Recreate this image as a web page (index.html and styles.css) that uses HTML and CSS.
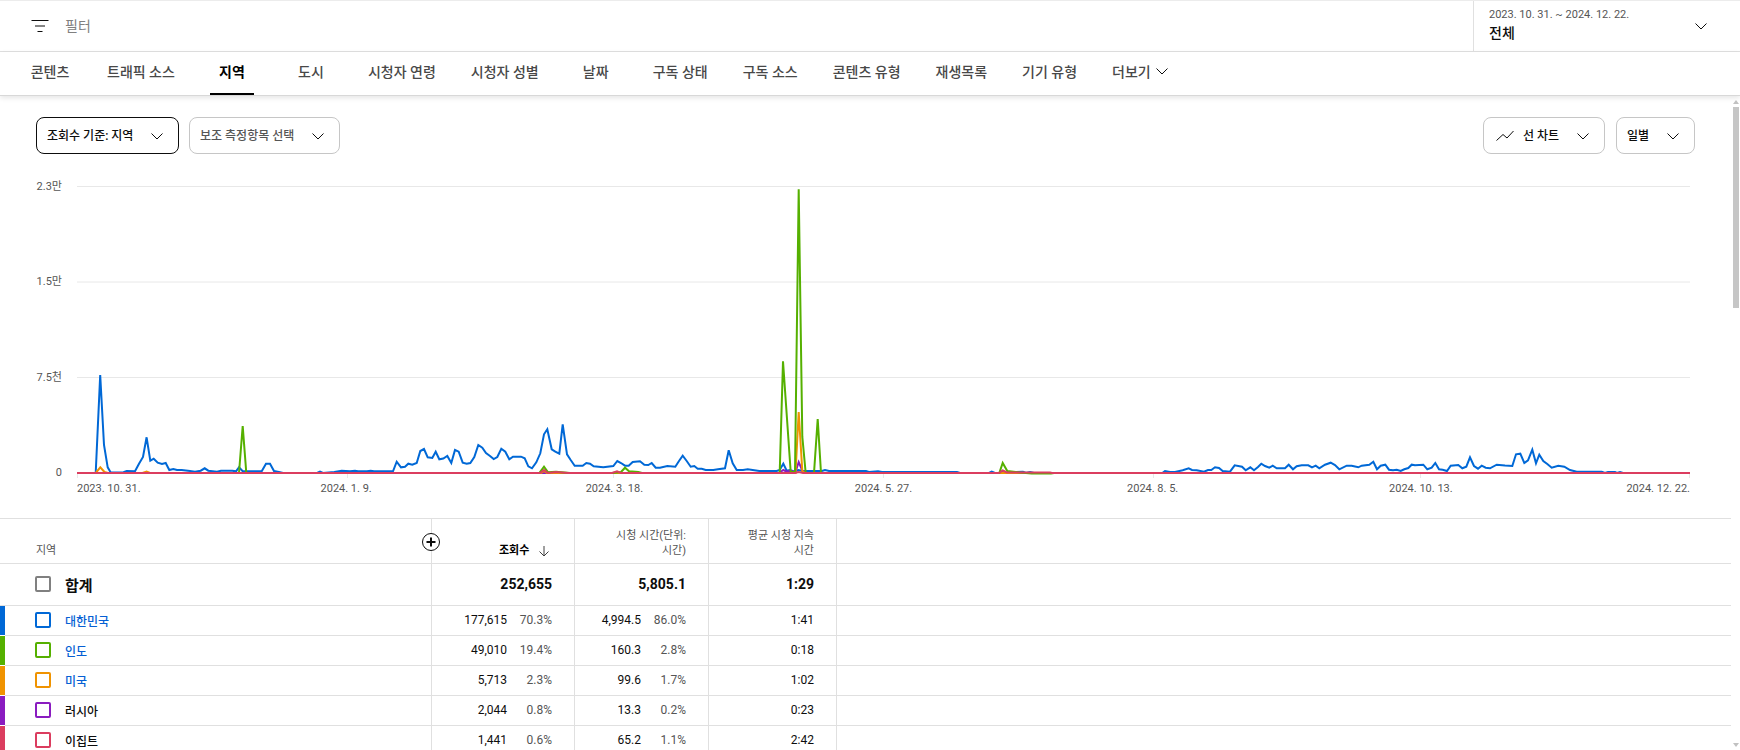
FILE: index.html
```html
<!DOCTYPE html>
<html lang="ko">
<head>
<meta charset="utf-8">
<meta name="viewport" content="width=device-width, initial-scale=1">
<title>지역 분석</title>
<link rel="stylesheet" href="styles.css">
</head>
<body>
<header class="filterbar">
  <label class="filter">
    <svg class="filter-icon" width="18" height="14" viewBox="0 0 18 14" aria-hidden="true"><path d="M.5 1.5h17M4 7h10M6.500 12.500h5"/></svg>
    <input class="filter-input" type="text" placeholder="필터" aria-label="필터">
  </label>
  <button class="daterange" type="button">
    <span class="daterange-text">
      <span class="daterange-dates">2023. 10. 31. ~ 2024. 12. 22.</span>
      <span class="daterange-name">전체</span>
    </span>
    <svg class="chevron" width="14" height="8" viewBox="0 0 14 8" aria-hidden="true"><path d="M1.500 1.500 7 7l5.500-5.500"/></svg>
  </button>
</header>

<nav class="tabs">
  <a class="tab" href="#content">콘텐츠</a>
  <a class="tab" href="#traffic">트래픽 소스</a>
  <a class="tab tab-active" href="#geography" aria-current="page">지역</a>
  <a class="tab" href="#city">도시</a>
  <a class="tab" href="#age">시청자 연령</a>
  <a class="tab" href="#gender">시청자 성별</a>
  <a class="tab" href="#date">날짜</a>
  <a class="tab" href="#substatus">구독 상태</a>
  <a class="tab" href="#subsource">구독 소스</a>
  <a class="tab" href="#type">콘텐츠 유형</a>
  <a class="tab" href="#playlist">재생목록</a>
  <a class="tab" href="#device">기기 유형</a>
  <button class="tab tab-more" type="button">더보기
    <svg class="chevron" width="14" height="8" viewBox="0 0 14 8" aria-hidden="true"><path d="M1.500 1.500 7 7l5.500-5.500"/></svg>
  </button>
</nav>

<div class="viewport">
<main class="report">
  <div class="toolbar">
    <div class="chip chip-primary">
      <select class="chip-select" aria-label="기본 측정항목"><option>조회수 기준: 지역</option></select>
      <svg class="chevron chip-chevron" width="14" height="8" viewBox="0 0 14 8" aria-hidden="true"><path d="M1.500 1.500 7 7l5.500-5.500"/></svg>
    </div>
    <div class="chip chip-muted">
      <select class="chip-select" aria-label="보조 측정항목"><option>보조 측정항목 선택</option></select>
      <svg class="chevron chip-chevron" width="14" height="8" viewBox="0 0 14 8" aria-hidden="true"><path d="M1.500 1.500 7 7l5.500-5.500"/></svg>
    </div>
    <div class="toolbar-end">
      <div class="chip chip-icon">
        <svg class="chip-lead" width="20" height="12" viewBox="0 0 20 12" aria-hidden="true"><path d="M1.500 10.500 8 4.500l4 3.500 6.500-7"/></svg>
        <select class="chip-select" aria-label="차트 유형"><option>선 차트</option></select>
        <svg class="chevron chip-chevron" width="14" height="8" viewBox="0 0 14 8" aria-hidden="true"><path d="M1.500 1.500 7 7l5.500-5.500"/></svg>
      </div>
      <div class="chip">
        <select class="chip-select" aria-label="기간 단위"><option>일별</option></select>
        <svg class="chevron chip-chevron" width="14" height="8" viewBox="0 0 14 8" aria-hidden="true"><path d="M1.500 1.500 7 7l5.500-5.500"/></svg>
      </div>
    </div>
  </div>

  <section class="chart" aria-label="지역별 조회수">
    <div class="y-axis"><span>2.3만</span><span>1.5만</span><span>7.5천</span><span>0</span></div>
    <svg class="plot" viewBox="77 179 1613 301" preserveAspectRatio="none" role="img" aria-label="지역별 일일 조회수 선 차트">
      <path class="grid" d="M77 186.500H1690M77 282H1690M77 377.500H1690"/>
      <path class="grid" d="M77.500 474v4M347.500 474v4M613.500 474v4M883.500 474v4M1153.500 474v4M1420.500 474v4M1689.500 474v4"/>
      <polyline class="series blue" points="77,473 95.7,473 100.2,375 104,445 107.7,467.3 110.7,472.5 123.5,472.3 126.7,471 135,471.3 139,463.7 143,457 146.6,437.3 150.3,460.7 153.7,458.7 157.7,462.7 162,464 165.7,463 169.3,470 173.3,469 177,470 181.7,470 190,471 195,471.7 200.7,470.7 204.7,468.3 208.3,470.7 217,471.7 221,470.7 232.3,470.7 236,471.3 239,467.3 242.7,471.3 261.7,471.3 266,463.7 270,463.7 274,471 280,472.3 283,473 317,473 320,471.7 323,473 334.3,472 341.7,470.7 350,471.3 355,470.7 358,471.3 367,471.3 370.7,470.7 374,471.3 393,471.3 396.7,461.7 401,467.3 405,466.7 408.3,463.7 412.3,464.7 416.7,463 420.3,451 424,449 427.7,457.3 432.3,458 435.7,451.7 439.3,459.3 443.3,458.500 447.3,456 451.3,463 455,450 458.7,451.7 462.7,462.7 466.7,463.7 470.3,463 474.3,457 478.3,445 482.3,447.7 486,453 490,456 493.7,459 497.3,457 501.3,448.7 505.3,451.7 509.3,459.3 513,456.7 521,456.7 524.7,458.3 528.3,466.3 532,468.3 536.3,462.3 540.3,453.3 544,434.3 547.3,429.3 551.7,449.3 555.3,451.7 559.3,453.7 562.7,424.3 567,454.3 570.7,460 574.7,465.7 582.7,465.7 586.3,463 590,463.7 593.7,466.3 603.3,467.3 613.3,466 617.3,461 621,463 625,465.7 628.7,465.7 632.7,462 640,461.3 644.3,464.7 648.3,465 651.7,463 655.7,467.7 660,467.7 667.3,466 675.3,466.7 679,461 682.7,455.7 686.7,461 690.7,466.7 694.3,466 697.7,468.7 701.7,468.7 705.7,470 713.3,470 718,469.3 725,468.3 728.7,450.3 732.7,463.3 736.7,470 743,470 747.7,469.3 759.3,471 776.7,471 779.7,470 783.3,463.7 786.7,470.7 790,470 795,471.7 798.3,470 803,471 822,471 825,470 829,471 866,471 869,472 878,471.3 882,472 957,472 960,473 989,473 991.7,471.7 995,473 1000,473 1002.7,471 1006,473 1015,472 1023,471.7 1026,473 1030,472 1034,473 1162.3,473 1165,471 1170,472 1175,472 1182.7,470.3 1188.7,468.3 1192,470 1196.7,470.3 1204,471.7 1208,470 1211.3,470 1215,467.3 1219,468 1222.7,471 1230,471.7 1234.7,465.3 1242,466.7 1245.7,470.3 1250.3,467.3 1254,470.3 1258,467 1261.3,463.7 1265,466 1269.3,467.7 1272.7,465.7 1276.7,468.3 1285,468.3 1288.7,464.7 1293,469.3 1296.7,466.3 1301.7,465.3 1308.3,465.3 1312,467.3 1315.7,465.7 1319.3,468.3 1325,464.7 1330.7,462.7 1335,465 1339.3,469.3 1346.7,465.7 1351.7,465.7 1358.3,467.3 1361.7,465.7 1369.3,464.7 1373.3,461.7 1377,469.3 1380.7,465.7 1385.3,464.7 1389,469.7 1393,470.3 1396.7,469.7 1400.7,471 1404.3,469.3 1408.3,468 1411.7,464.7 1415,465.3 1423.3,464.7 1427.3,469.3 1431.7,467.7 1435.3,463 1439,469.3 1442.7,469.7 1447,471 1450.7,465.7 1458.3,465 1462.3,468.3 1466.3,466.7 1470,457.3 1474,466 1478,468.7 1481.7,465.7 1485.7,467.7 1490,468.3 1496.7,464.7 1505,465.500 1512.3,466 1516,454.3 1520.3,453.7 1524.3,463 1528,460.3 1532.3,449.7 1536,463.3 1539.3,454.7 1543.3,461 1547.3,464 1551.7,467.7 1558.3,465.7 1564.3,466.7 1570,470 1576.7,471.7 1601.7,471.7 1605,473 1608,472 1615,472 1617,473 1620,472 1623,473 1690,473"/>
      <polyline class="series purple" points="77,473 779,473 783.3,470 786.7,471.7 790,470.7 795.500,472 798.7,462 802.3,470.500 806,473 1690,473"/>
      <polyline class="series orange" points="77,473 95.7,473 100.3,467.3 104.500,472 108,473 142.500,473 146.6,471.500 150,473 541,473 544,471 547,473 795.500,473 798.7,412 802.3,471 805,473 1690,473"/>
      <polyline class="series green" points="77,473 239,473 242.7,426 246.3,473 539.3,473 544,466.7 548,472.3 556,471.7 570,473 612.3,473 621,472 625,467.7 629,471.3 638.3,472 642,473 779.7,473 783,361.3 790.7,472 795,472 798.7,189.3 802.3,436.7 805.7,473 814,473 817.7,419 821,473 999.3,473 1002.7,463 1007.3,471 1020,472.500 1031.7,473.500 1051,473.500 1054,473 1690,473"/>
      <polyline class="series red" points="77,473 540,473 544,470 548,473 556,472 568,473 612,473 617,471.3 621,473 795,473 798.7,472 803,473 999,473 1002.7,470.500 1007,472.500 1030,472.500 1050,472.500 1052,473 1690,473"/>
    </svg>
    <div class="x-axis">
      <span>2023. 10. 31.</span><span>2024. 1. 9.</span><span>2024. 3. 18.</span><span>2024. 5. 27.</span><span>2024. 8. 5.</span><span>2024. 10. 13.</span><span>2024. 12. 22.</span>
    </div>
  </section>

  <table class="data">
    <colgroup><col class="col-swatch"><col class="col-name"><col class="col-views"><col class="col-watch"><col class="col-avg"><col></colgroup>
    <thead>
      <tr>
        <th class="swatch"></th>
        <th class="name" scope="col">지역
          <button class="add" type="button" aria-label="측정항목 추가"><svg width="20" height="20" viewBox="0 0 20 20" aria-hidden="true"><circle cx="10" cy="10" r="8.500"/><path d="M10 5.500v9M5.500 10h9"/></svg></button>
        </th>
        <th class="num sorted" scope="col" aria-sort="descending">조회수
          <svg class="sort" width="16" height="12" viewBox="0 0 16 12" aria-hidden="true"><path d="M8 1v10M3.500 6.500 8 11l4.500-4.500"/></svg>
        </th>
        <th class="num" scope="col">시청 시간(단위:<br>시간)</th>
        <th class="num" scope="col">평균 시청 지속<br>시간</th>
        <th class="rest"></th>
      </tr>
    </thead>
    <tbody>
      <tr class="total"><td class="swatch"></td><td class="name"><label class="pick"><input type="checkbox" class="check">합계</label></td><td class="num">252,655</td><td class="num">5,805.1</td><td class="num">1:29</td><td class="rest"></td></tr>
      <tr class="row-blue"><td class="swatch"></td><td class="name"><div class="pick"><input type="checkbox" class="check" aria-label="대한민국"><a href="#kr">대한민국</a></div></td><td class="num">177,615<span class="pct">70.3%</span></td><td class="num">4,994.5<span class="pct">86.0%</span></td><td class="num">1:41</td><td class="rest"></td></tr>
      <tr class="row-green"><td class="swatch"></td><td class="name"><div class="pick"><input type="checkbox" class="check" aria-label="인도"><a href="#in">인도</a></div></td><td class="num">49,010<span class="pct">19.4%</span></td><td class="num">160.3<span class="pct">2.8%</span></td><td class="num">0:18</td><td class="rest"></td></tr>
      <tr class="row-orange"><td class="swatch"></td><td class="name"><div class="pick"><input type="checkbox" class="check" aria-label="미국"><a href="#us">미국</a></div></td><td class="num">5,713<span class="pct">2.3%</span></td><td class="num">99.6<span class="pct">1.7%</span></td><td class="num">1:02</td><td class="rest"></td></tr>
      <tr class="row-purple"><td class="swatch"></td><td class="name"><label class="pick"><input type="checkbox" class="check">러시아</label></td><td class="num">2,044<span class="pct">0.8%</span></td><td class="num">13.3<span class="pct">0.2%</span></td><td class="num">0:23</td><td class="rest"></td></tr>
      <tr class="row-red"><td class="swatch"></td><td class="name"><label class="pick"><input type="checkbox" class="check">이집트</label></td><td class="num">1,441<span class="pct">0.6%</span></td><td class="num">65.2<span class="pct">1.1%</span></td><td class="num">2:42</td><td class="rest"></td></tr>
    </tbody>
  </table>
</main>
<div class="scrollbar" aria-hidden="true">
  <svg width="6" height="4" viewBox="0 0 6 4"><path d="M0 4 3 0l3 4z"/></svg>
  <div class="thumb"></div>
  <svg class="scroll-down" width="6" height="4" viewBox="0 0 6 4"><path d="M0 0h6L3 4z"/></svg>
</div>
</div>
</body>
</html>
```
FILE: styles.css
```css
:root {
  --line: #e0e0e0;
  --text: #0d0d0d;
  --muted: #555;
  --blue: #0068d6;
  --green: #55b000;
  --orange: #f09300;
  --purple: #8a1cc0;
  --red: #db3d5f;
}

* { box-sizing: border-box; }

body {
  margin: 0;
  height: 100vh;
  display: flex;
  flex-direction: column;
  overflow: hidden;
  background: #fff;
  color: var(--text);
  font-family: Roboto, "Noto Sans CJK KR", sans-serif;
  font-size: 12px;
}

button, input, select {
  margin: 0;
  padding: 0;
  border: 0;
  background: none;
  color: inherit;
  font: inherit;
}

svg { display: block; flex: none; }
a { color: inherit; text-decoration: none; }

.chevron { fill: none; stroke: #0d0d0d; stroke-width: 1; }

/* Filter bar */
.filterbar {
  display: flex;
  flex: none;
  height: 52px;
  border-top: 1px solid #ececec;
  border-bottom: 1px solid var(--line);
}

.filter {
  display: flex;
  flex: 1;
  align-items: center;
  gap: 16px;
  padding: 0 0 1px 31px;
}

.filter-icon { fill: none; stroke: #0d0d0d; stroke-width: 1; }
.filter-input { flex: 1; height: 32px; font-size: 14px; outline: 0; }
.filter-input::placeholder { color: #808080; opacity: 1; }

.daterange {
  display: flex;
  align-items: center;
  justify-content: space-between;
  width: 267px;
  padding: 0 32px 0 15px;
  border-left: 1px solid var(--line);
  text-align: left;
}

.daterange-text { display: flex; flex-direction: column; padding-bottom: 2px; }
.daterange-dates { color: var(--muted); font-size: 11px; line-height: 16px; }
.daterange-name { font-size: 14px; font-weight: 500; line-height: 20px; }

/* Tabs */
.tabs {
  display: flex;
  flex: none;
  gap: 35px;
  height: 44px;
  padding-left: 28px;
  border-bottom: 1px solid #d8d8d8;
  box-shadow: 0 2px 5px rgba(0, 0, 0, .1);
}

.tab {
  display: flex;
  align-items: center;
  justify-content: center;
  min-width: 44px;
  padding-bottom: 3px;
  border-bottom: 2px solid transparent;
  color: #484848;
  font-size: 14px;
  font-weight: 500;
  white-space: nowrap;
}

.tab-active { border-color: #000; color: #000; font-weight: 700; }
.tab-more { gap: 4px; }

/* Scrolling report */
.viewport { display: flex; flex: 1; min-height: 0; }
.report { flex: 1; min-width: 0; overflow: hidden; }

.scrollbar {
  display: flex;
  flex-direction: column;
  flex: none;
  align-items: center;
  gap: 3px;
  width: 9px;
  padding: 4px 0 3px;
  fill: #c1c1c1;
}

.thumb { width: 6px; height: 31%; background: #c6c6c6; }
.scroll-down { margin-top: auto; }

.toolbar { display: flex; gap: 10px; padding: 21px 36px 0; }
.toolbar-end { display: flex; gap: 11px; margin-left: auto; }

.chip {
  display: grid;
  align-items: center;
  height: 37px;
  border: 1px solid #c6c6c6;
  border-radius: 8px;
}

.chip > * { grid-area: 1 / 1; }
.chip-primary { border-color: #0d0d0d; }
.chip-muted { color: var(--muted); }
.chip-chevron { margin-right: 14px; justify-self: end; pointer-events: none; }
.chip-lead { margin-left: 11px; fill: none; stroke: #0d0d0d; pointer-events: none; }

.chip-select {
  appearance: none;
  height: 35px;
  padding: 0 44px 0 10px;
  font-weight: 500;
}

.chip-icon .chip-select { padding-left: 39px; }

/* Chart */
.chart {
  display: grid;
  grid-template-columns: 26px minmax(0, 1fr);
  column-gap: 15px;
  margin-top: 25px;
  padding: 0 41px 0 36px;
  color: var(--muted);
  font-size: 11px;
}

.y-axis {
  display: flex;
  flex-direction: column;
  justify-content: space-between;
  padding-top: 1px;
  line-height: 14px;
  text-align: right;
  white-space: nowrap;
}

.plot { width: 100%; height: 301px; overflow: visible; }
.grid, .series { fill: none; vector-effect: non-scaling-stroke; }
.grid { stroke: #e8e8e8; }
.series { stroke-width: 2; }
.blue { stroke: var(--blue); }
.green { stroke: var(--green); }
.orange { stroke: var(--orange); }
.purple { stroke: var(--purple); }
.red { stroke: var(--red); }

.x-axis {
  display: grid;
  grid-column: 2;
  grid-template-columns: 70fr 139fr 139fr 140fr 139fr 139fr 70fr;
  padding-top: 1px;
  line-height: 16px;
  text-align: center;
  white-space: nowrap;
}

.x-axis span { min-width: 0; }
.x-axis span:first-child { text-align: left; }
.x-axis span:last-child { text-align: right; }

/* Table */
.data {
  width: 100%;
  margin-top: 21px;
  border-collapse: separate;
  border-spacing: 0;
  table-layout: fixed;
}

.col-swatch { width: 5px; }
.col-name { width: 427px; }
.col-views { width: 143px; }
.col-watch { width: 134px; }
.col-avg { width: 128px; }

.data th, .data td {
  height: 30px;
  padding: 0 0 1px;
  border-bottom: 1px solid var(--line);
  text-align: left;
}

.data .name, .data .num { border-right: 1px solid var(--line); }
.data .name { padding-left: 30px; }
.data .num { padding-right: 22px; text-align: right; white-space: nowrap; }

.data th {
  position: relative;
  height: 46px;
  padding-bottom: 5px;
  border-top: 1px solid var(--line);
  color: var(--muted);
  font-size: 11px;
  font-weight: 400;
  line-height: 15px;
  vertical-align: bottom;
}

.data th.name { padding-left: 31px; }
.data th.sorted { color: #000; font-weight: 700; }
.sort { display: inline-block; margin-left: 4px; vertical-align: -3px; fill: none; stroke: #404040; }

.add { position: absolute; top: 13px; right: -10px; z-index: 1; }
.add svg { fill: #fff; stroke: #0d0d0d; stroke-width: 1; }
.add path { stroke-width: 2; }

.total td { height: 42px; font-size: 14px; font-weight: 700; }

.pick { display: flex; align-items: center; gap: 14px; font-weight: 500; }
.total .pick { font-size: 15px; font-weight: 700; }
.pick a { color: #065fd4; }

.check {
  appearance: none;
  width: 16px;
  height: 16px;
  border: 2px solid var(--row, #808080);
  border-radius: 2px;
}

.pct { display: inline-block; width: 45px; color: var(--muted); }

.row-blue { --row: var(--blue); }
.row-green { --row: var(--green); }
.row-orange { --row: var(--orange); }
.row-purple { --row: var(--purple); }
.row-red { --row: var(--red); }
tr[class^="row"] .swatch { border-bottom-color: #fff; background: var(--row) padding-box; }
```
